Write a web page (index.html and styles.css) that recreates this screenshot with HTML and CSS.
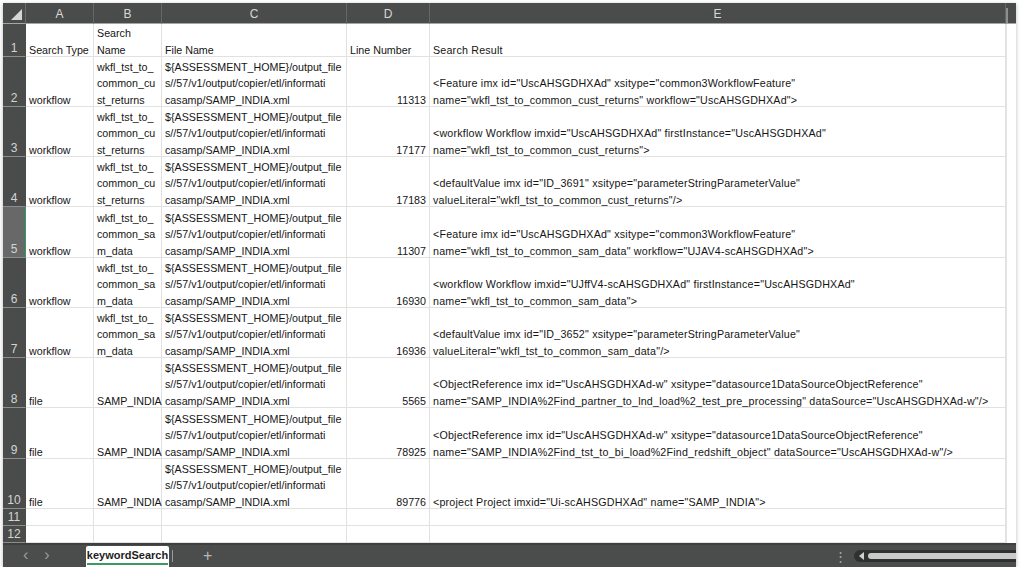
FILE: index.html
```html
<!DOCTYPE html>
<html>
<head>
<meta charset="utf-8">
<link rel="stylesheet" href="styles.css">
</head>
<body>
<div class="window">
  <div class="sheet">
    <div class="corner"><span class="tri"></span></div>
    <div class="colhead">A</div>
    <div class="colhead">B</div>
    <div class="colhead">C</div>
    <div class="colhead">D</div>
    <div class="colhead">E</div>
    <div class="colhead vs"><span class="vthumb"></span></div>

    <div class="rowhead">1</div>
    <div class="cell">Search Type</div>
    <div class="cell">Search<br>Name</div>
    <div class="cell">File Name</div>
    <div class="cell">Line Number</div>
    <div class="cell res">Search Result</div>
    <div class="vcol"></div>

    <div class="rowhead">2</div>
    <div class="cell">workflow</div>
    <div class="cell">wkfl_tst_to_<br>common_cu<br>st_returns</div>
    <div class="cell">${ASSESSMENT_HOME}/output_file<br>s//57/v1/output/copier/etl/informati<br>casamp/SAMP_INDIA.xml</div>
    <div class="cell num">11313</div>
    <div class="cell res">&lt;Feature imx id="UscAHSGDHXAd" xsitype="common3WorkflowFeature"<br>name="wkfl_tst_to_common_cust_returns" workflow="UscAHSGDHXAd"&gt;</div>
    <div class="vcol"></div>

    <div class="rowhead">3</div>
    <div class="cell">workflow</div>
    <div class="cell">wkfl_tst_to_<br>common_cu<br>st_returns</div>
    <div class="cell">${ASSESSMENT_HOME}/output_file<br>s//57/v1/output/copier/etl/informati<br>casamp/SAMP_INDIA.xml</div>
    <div class="cell num">17177</div>
    <div class="cell res">&lt;workflow Workflow imxid="UscAHSGDHXAd" firstInstance="UscAHSGDHXAd"<br>name="wkfl_tst_to_common_cust_returns"&gt;</div>
    <div class="vcol"></div>

    <div class="rowhead">4</div>
    <div class="cell">workflow</div>
    <div class="cell">wkfl_tst_to_<br>common_cu<br>st_returns</div>
    <div class="cell">${ASSESSMENT_HOME}/output_file<br>s//57/v1/output/copier/etl/informati<br>casamp/SAMP_INDIA.xml</div>
    <div class="cell num">17183</div>
    <div class="cell res">&lt;defaultValue imx id="ID_3691" xsitype="parameterStringParameterValue"<br>valueLiteral="wkfl_tst_to_common_cust_returns"/&gt;</div>
    <div class="vcol"></div>

    <div class="rowhead active">5</div>
    <div class="cell">workflow</div>
    <div class="cell">wkfl_tst_to_<br>common_sa<br>m_data</div>
    <div class="cell">${ASSESSMENT_HOME}/output_file<br>s//57/v1/output/copier/etl/informati<br>casamp/SAMP_INDIA.xml</div>
    <div class="cell num">11307</div>
    <div class="cell res">&lt;Feature imx id="UscAHSGDHXAd" xsitype="common3WorkflowFeature"<br>name="wkfl_tst_to_common_sam_data" workflow="UJAV4-scAHSGDHXAd"&gt;</div>
    <div class="vcol"></div>

    <div class="rowhead">6</div>
    <div class="cell">workflow</div>
    <div class="cell">wkfl_tst_to_<br>common_sa<br>m_data</div>
    <div class="cell">${ASSESSMENT_HOME}/output_file<br>s//57/v1/output/copier/etl/informati<br>casamp/SAMP_INDIA.xml</div>
    <div class="cell num">16930</div>
    <div class="cell res">&lt;workflow Workflow imxid="UJffV4-scAHSGDHXAd" firstInstance="UscAHSGDHXAd"<br>name="wkfl_tst_to_common_sam_data"&gt;</div>
    <div class="vcol"></div>

    <div class="rowhead">7</div>
    <div class="cell">workflow</div>
    <div class="cell">wkfl_tst_to_<br>common_sa<br>m_data</div>
    <div class="cell">${ASSESSMENT_HOME}/output_file<br>s//57/v1/output/copier/etl/informati<br>casamp/SAMP_INDIA.xml</div>
    <div class="cell num">16936</div>
    <div class="cell res">&lt;defaultValue imx id="ID_3652" xsitype="parameterStringParameterValue"<br>valueLiteral="wkfl_tst_to_common_sam_data"/&gt;</div>
    <div class="vcol"></div>

    <div class="rowhead">8</div>
    <div class="cell">file</div>
    <div class="cell">SAMP_INDIA</div>
    <div class="cell">${ASSESSMENT_HOME}/output_file<br>s//57/v1/output/copier/etl/informati<br>casamp/SAMP_INDIA.xml</div>
    <div class="cell num">5565</div>
    <div class="cell res">&lt;ObjectReference imx id="UscAHSGDHXAd-w" xsitype="datasource1DataSourceObjectReference"<br>name="SAMP_INDIA%2Find_partner_to_lnd_load%2_test_pre_processing" dataSource="UscAHSGDHXAd-w"/&gt;</div>
    <div class="vcol"></div>

    <div class="rowhead">9</div>
    <div class="cell">file</div>
    <div class="cell">SAMP_INDIA</div>
    <div class="cell">${ASSESSMENT_HOME}/output_file<br>s//57/v1/output/copier/etl/informati<br>casamp/SAMP_INDIA.xml</div>
    <div class="cell num">78925</div>
    <div class="cell res">&lt;ObjectReference imx id="UscAHSGDHXAd-w" xsitype="datasource1DataSourceObjectReference"<br>name="SAMP_INDIA%2Find_tst_to_bi_load%2Find_redshift_object" dataSource="UscAHSGDHXAd-w"/&gt;</div>
    <div class="vcol"></div>

    <div class="rowhead">10</div>
    <div class="cell">file</div>
    <div class="cell">SAMP_INDIA</div>
    <div class="cell">${ASSESSMENT_HOME}/output_file<br>s//57/v1/output/copier/etl/informati<br>casamp/SAMP_INDIA.xml</div>
    <div class="cell num">89776</div>
    <div class="cell res">&lt;project Project imxid="Ui-scAHSGDHXAd" name="SAMP_INDIA"&gt;</div>
    <div class="vcol"></div>

    <div class="rowhead">11</div>
    <div class="cell"></div>
    <div class="cell"></div>
    <div class="cell"></div>
    <div class="cell"></div>
    <div class="cell"></div>
    <div class="vcol"></div>

    <div class="rowhead">12</div>
    <div class="cell"></div>
    <div class="cell"></div>
    <div class="cell"></div>
    <div class="cell"></div>
    <div class="cell"></div>
    <div class="vcol"></div>
  </div>

  <div class="tabbar">
    <div class="nav">
      <span class="arrow">&lsaquo;</span>
      <span class="arrow">&rsaquo;</span>
    </div>
    <div class="tab"><span class="tabname">keywordSearch</span></div>
    <span class="tabsep"></span>
    <span class="plus">+</span>
    <span class="spacer"></span>
    <span class="dots">&#8942;</span>
    <div class="hscroll">
      <svg class="harrow" width="6" height="8" viewBox="0 0 6 8"><path d="M5 0 L0 4 L5 8 Z" fill="#d0d0d0"/></svg>
      <span class="hthumb"></span>
    </div>
  </div>
</div>
</body>
</html>
```

FILE: styles.css
```css
html, body {
  margin: 0;
  padding: 0;
  background: #ffffff;
}

body {
  font-family: "Liberation Sans", Arial, sans-serif;
  font-size: 10.7px;
  color: #151515;
}

.window {
  margin: 3px 0 0 3px;
  width: 1013px;
  height: 564px;
  display: flex;
  flex-direction: column;
  background: #ffffff;
  box-shadow: 0 1px 4px rgba(0, 0, 0, 0.28);
  overflow: hidden;
}

.sheet {
  display: grid;
  grid-template-columns: 23px 68px 68px 185px 83px 576px 10px;
  grid-template-rows: 21px 33px 50px 50px 50px 51px 50px 50px 50px 51px 50px 17px 17px;
  flex: none;
}

.corner {
  background: #4a4c4b;
  border-bottom: 1px solid #a5a5a5;
  border-right: 1px solid #6a6c6b;
  box-sizing: border-box;
  position: relative;
}

.tri {
  position: absolute;
  right: 3px;
  bottom: 3px;
  width: 0;
  height: 0;
  border-left: 11px solid transparent;
  border-bottom: 11px solid #d6d6d6;
}

.colhead {
  background: #4a4c4b;
  color: #d8d8d8;
  font-size: 12px;
  display: flex;
  align-items: center;
  justify-content: center;
  padding-top: 2px;
  border-right: 1px solid #656766;
  border-bottom: 1px solid #a5a5a5;
  box-sizing: border-box;
}

.colhead.vs {
  border-right: none;
  padding-top: 0;
  justify-content: flex-start;
  align-items: flex-end;
}

.vthumb {
  display: block;
  width: 2px;
  height: 15px;
  background: #8d8e8d;
}

.rowhead {
  background: #4a4c4b;
  color: #d4d4d4;
  font-size: 12px;
  display: flex;
  align-items: flex-end;
  justify-content: center;
  padding-bottom: 1px;
  border-bottom: 1px solid #8c8d8c;
  border-right: 1px solid #4a4c4b;
  box-sizing: border-box;
}

.rowhead.active {
  background: #676867;
  border-right: 1px solid #21a366;
}

.cell {
  display: flex;
  flex-direction: column;
  justify-content: flex-end;
  padding: 0 3px;
  line-height: 16.5px;
  white-space: nowrap;
  border-right: 1px solid #e1e1e1;
  border-bottom: 1px solid #e1e1e1;
  box-sizing: border-box;
  min-width: 0;
}

.cell::after {
  content: "";
  display: block;
  height: 0;
  margin-bottom: -2px;
}

.cell.num {
  align-items: flex-end;
}

.cell.res {
  letter-spacing: 0.2px;
}

.vcol {
  border-left: 1px solid #e3e3e3;
  background: #ffffff;
}

.tabbar {
  flex: 1;
  background: #4b4d4c;
  display: flex;
  align-items: stretch;
  border-top: 2px solid #3e403f;
}

.nav {
  width: 83px;
  display: flex;
  align-items: center;
  gap: 16px;
  padding-left: 20px;
  box-sizing: border-box;
}

.arrow {
  color: #9a9b9a;
  font-size: 16px;
  line-height: 1;
  margin-top: -2px;
}

.tab {
  width: 83px;
  background: #ffffff;
  display: flex;
  align-items: center;
  justify-content: center;
  border-radius: 2px 2px 0 0;
  margin-top: 1px;
}

.tabname {
  font-weight: bold;
  color: #1e1e1e;
  font-size: 11px;
  padding-bottom: 1px;
  border-bottom: 2px solid #3f9a60;
  line-height: 14px;
}

.tabsep {
  width: 1px;
  height: 12px;
  background: #9a9b9a;
  align-self: center;
  margin-left: 3px;
}

.plus {
  color: #b6b7b6;
  font-size: 16px;
  align-self: center;
  margin-left: 30px;
  line-height: 1;
}

.spacer {
  flex: 1;
}

.dots {
  color: #a8a9a8;
  font-size: 13px;
  align-self: center;
  margin-right: 7px;
}

.hscroll {
  width: 162px;
  height: 12px;
  align-self: center;
  background: #2f3130;
  border-radius: 6px 0 0 6px;
  display: flex;
  align-items: center;
  padding-left: 5px;
  gap: 3px;
  box-sizing: border-box;
}

.hthumb {
  flex: 1;
  height: 6px;
  background: #c9c9c9;
  border-radius: 3px 0 0 3px;
}
```
